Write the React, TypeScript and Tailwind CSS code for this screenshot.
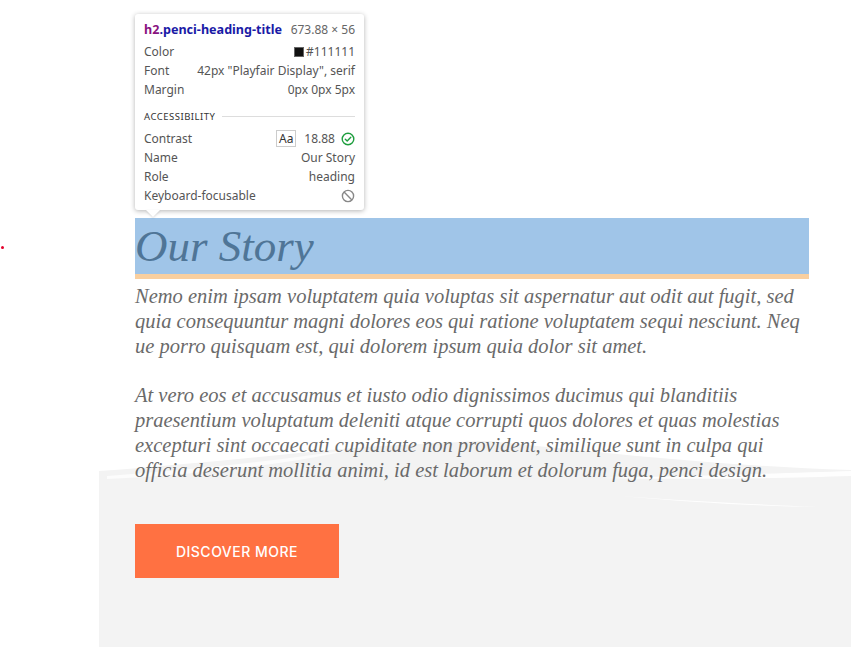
import React from "react";

const sans = { fontFamily: '"Noto Sans", "Open Sans", sans-serif' };

function Row({ label, children }: { label: string; children: React.ReactNode }) {
  return (
    <div className="flex h-[19px] items-center justify-between">
      <span className="text-[#555]">{label}</span>
      <span className="flex items-center gap-[6px] text-[#555]">{children}</span>
    </div>
  );
}

function Tooltip() {
  return (
    <div
      className="absolute left-[135px] top-[14px] w-[229px] rounded-[3px] bg-white px-[9px] pb-[5px] pt-[6px] text-[12px] leading-[19px] shadow-[0_1px_5px_rgba(0,0,0,0.3)]"
      style={sans}
    >
      <div className="mb-[3px] flex h-[19px] items-center justify-between">
        <span className="font-bold text-[12.6px]">
          <span className="text-[#881280]">h2</span>
          <span className="text-[#1a1aa6]">.penci-heading-title</span>
        </span>
        <span className="text-[#666]">673.88 × 56</span>
      </div>
      <Row label="Color">
        <span className="flex items-center gap-[2px]">
          <span className="inline-block h-[10px] w-[10px] border border-[#666] bg-[#111]" />
          #111111
        </span>
      </Row>
      <Row label="Font">42px "Playfair Display", serif</Row>
      <Row label="Margin">0px 0px 5px</Row>
      <div className="mt-[8px] flex h-[19px] items-center gap-[7px]">
        <span className="text-[9.5px] tracking-[0.5px] text-[#333]">ACCESSIBILITY</span>
        <span className="h-px flex-1 bg-[#ddd]" />
      </div>
      <div className="mt-[3px]">
        <Row label="Contrast">
          <span className="flex h-[17px] w-[20px] items-center justify-center border border-[#ccc] text-[#333]">Aa</span>
          <span className="ml-[2px]">18.88</span>
          <svg width="14" height="14" viewBox="0 0 14 14" fill="none" stroke="#1e9e3e" strokeWidth="1.4">
            <circle cx="7" cy="7" r="5.8" />
            <path d="M4.3 7.2 L6.2 9 L9.8 5.2" strokeLinecap="round" strokeLinejoin="round" />
          </svg>
        </Row>
        <Row label="Name">Our Story</Row>
        <Row label="Role">heading</Row>
        <Row label="Keyboard-focusable">
          <svg width="14" height="14" viewBox="0 0 14 14" fill="none" stroke="#888" strokeWidth="1.4">
            <circle cx="7" cy="7" r="5.6" />
            <path d="M3.1 3.1 L10.9 10.9" />
          </svg>
        </Row>
      </div>
      <div className="absolute left-[11px] top-full h-0 w-0 border-l-[7px] border-r-[7px] border-t-[7px] border-l-transparent border-r-transparent border-t-white drop-shadow-[0_1px_1px_rgba(0,0,0,0.15)]" />
    </div>
  );
}

function WaveBg() {
  return (
    <svg
      className="absolute left-0 top-[222px]"
      width="752"
      height="207"
      viewBox="0 0 752 207"
    >
      <rect x="0" y="0" width="752" height="207" fill="#f3f3f3" />
      <path d="M0,0 L0,31 C70,26 150,18 230,10 C290,5 350,2 410,0 Z" fill="#ffffff" />
      <path d="M8,36 C90,30 170,22 262,8 C190,24 110,34 8,39 Z" fill="#ffffff" opacity="0.7" />
      <path d="M380,0 C500,12 620,26 752,30 L752,0 Z" fill="#ffffff" />
      <path d="M500,38 C600,36 690,33 752,31 L752,36 C690,38 600,40 500,38 Z" fill="#ffffff" opacity="0.9" />
      <path d="M520,56 C590,62 650,66 720,67 C650,64 590,61 520,56 Z" fill="#ffffff" opacity="0.9" />
    </svg>
  );
}

const p1 = [
  "Nemo enim ipsam voluptatem quia voluptas sit aspernatur aut odit aut fugit, sed",
  "quia consequuntur magni dolores eos qui ratione voluptatem sequi nesciunt. Neq",
  "ue porro quisquam est, qui dolorem ipsum quia dolor sit amet.",
];
const p2 = [
  "At vero eos et accusamus et iusto odio dignissimos ducimus qui blanditiis",
  "praesentium voluptatum deleniti atque corrupti quos dolores et quas molestias",
  "excepturi sint occaecati cupiditate non provident, similique sunt in culpa qui",
  "officia deserunt mollitia animi, id est laborum et dolorum fuga, penci design.",
];

export default function App() {
  const serif = { fontFamily: '"Liberation Serif", "DejaVu Serif", serif' };
  return (
    <div className="relative h-[647px] w-[851px] overflow-hidden bg-white">
      <div className="absolute left-[1px] top-[246px] h-[3px] w-[3px] rounded-full bg-[#e4002b]" />
      <div className="pl-[99px] pt-[218px]">
        <div className="relative h-[429px] w-[752px]">
          <WaveBg />
          <div className="relative pl-[36px] pr-[42px]">
            <div className="border-b-[5px] border-[#f9cf9f]">
              <h2
                className="h-[56px] bg-[#a0c5e8] text-[45px] italic leading-[56px] text-[#4f7597]"
                style={serif}
              >
                Our Story
              </h2>
            </div>
            <div className="pt-[5px] text-[20.5px] italic leading-[25px] text-[#6a6a6a]" style={serif}>
              <p className="whitespace-nowrap">
                {p1.map((l, i) => (
                  <span key={i} className="block">{l}</span>
                ))}
              </p>
              <p className="mt-[24px] whitespace-nowrap">
                {p2.map((l, i) => (
                  <span key={i} className="block">{l}</span>
                ))}
              </p>
            </div>
            <button
              className="mt-[41px] flex h-[54px] w-[204px] items-center justify-center bg-[#ff7142] text-[14px] font-medium tracking-[0.5px] text-white"
              style={{ fontFamily: 'Inter, "Open Sans", sans-serif' }}
            >
              DISCOVER MORE
            </button>
          </div>
        </div>
      </div>
      <Tooltip />
    </div>
  );
}
